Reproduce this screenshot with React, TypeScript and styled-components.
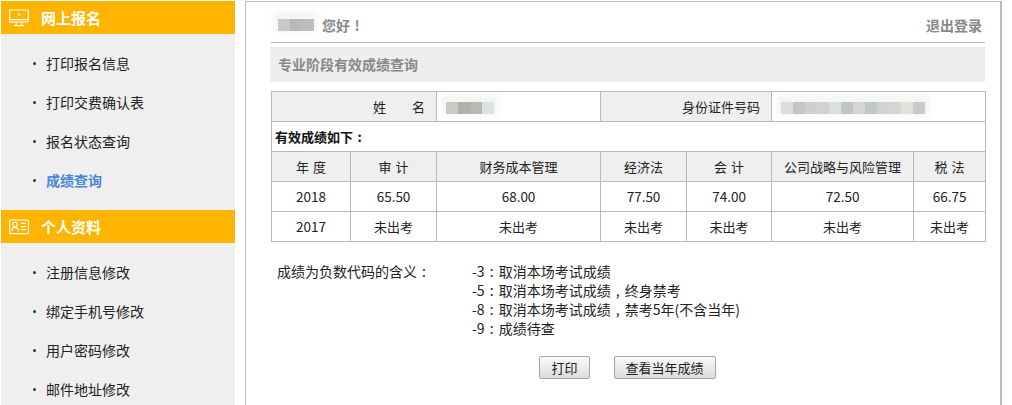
import React from "react";
import styled, { createGlobalStyle } from "styled-components";

const Global = createGlobalStyle`
  html, body { margin: 0; padding: 0; height: 405px; overflow: hidden; background: #fff; }
  body { font-family: "Noto Sans CJK SC", "Noto Sans", sans-serif; font-size: 14px; color: #222; }
`;
const Page = styled.div`display: flex; align-items: flex-start; height: 405px; overflow: hidden; padding: 1px 0 0 1px; box-sizing: border-box;`;
const Sidebar = styled.aside`width: 234px; height: 500px; background: #efefef; flex: none;`;
const SideHead = styled.div`height: 33px; background: #ffb400; color: #fff; font-weight: 700; font-size: 15px; display: flex; align-items: center; padding-left: 8px; gap: 12px;`;
const SideList = styled.ul`list-style: none; margin: 0; padding: 10px 0 10px;`;
const SideItem = styled.li<{ $active?: boolean }>`
  height: 39px; display: flex; align-items: center; padding-left: 32px; gap: 10px; line-height: 39px;
  color: ${(p) => (p.$active ? "#4a86d8" : "#222")}; font-weight: ${(p) => (p.$active ? 700 : 400)};
  &::before { content: ""; width: 3px; height: 3px; border-radius: 50%; background: #333; flex: none; }
`;
const Main = styled.main`width: 757px; height: 500px; margin-left: 10px; border: 2px solid #bcbcbc; border-width: 1px 2px 0 1px; box-sizing: border-box; padding: 0 15px 0 24px; flex: none;`;
const Greeting = styled.div`height: 41px; margin-left: 1px; border-bottom: 1px solid #bbb; display: flex; align-items: center; justify-content: space-between; color: #888; font-weight: 700; padding-top: 5px; box-sizing: border-box; padding-right: 3px;`;
const Hello = styled.span`display: flex; align-items: center;`;
const HelloMosaic = styled.span`display: inline-flex; margin: 0 8px 0 7px;`;
const Title = styled.div`margin-top: 4px; height: 35px; background: #eee; color: #888; font-weight: 700; line-height: 35px; padding-left: 8px;`;
const Mosaic = styled.span`display: inline-flex; height: 12px; flex: none; vertical-align: middle; box-shadow: 0 -3px 5px 4px rgba(235,235,235,.5);`;
const Tile = styled.span<{ $c: string; $w: number }>`width: ${(p) => p.$w}px; background: ${(p) => p.$c};`;
const Punct = styled.span`display: inline-block; width: 1em; text-align: center;`;
const Grid = styled.table`margin: 9px 0 0 1px; width: 714px; border-collapse: collapse; table-layout: fixed; text-align: center; font-size: 13px;`;
const Cell = styled.td<{ $num?: boolean }>`height: 29px; padding: 0; border: 1px solid #b8b8b8; line-height: 29px; color: #222; font-size: ${(p) => (p.$num ? "13.5px" : "13px")};`;
const Head = styled(Cell)`background: #efefef; word-spacing: 1px;`;
const LabelCell = styled(Head)`text-align: right; padding-right: 11px;`;
const ValueCell = styled(Cell)`text-align: left; padding-left: 9px;`;
const Caption = styled(Cell)`text-align: left; padding-left: 3px; font-weight: 700; color: #111;`;
const Notes = styled.div`display: flex; margin: 20px 0 0 7px; line-height: 19px; color: #222;`;
const NoteLabel = styled.div`width: 195px;`;
const Actions = styled.div`display: flex; justify-content: center; gap: 24px; margin-top: 18px;`;
const Btn = styled.button`height: 23px; padding: 0 11px; border: 1px solid #a5a5a5; border-radius: 2px; background: linear-gradient(#fafafa, #dcdcdc); font: inherit; font-size: 13px; line-height: 20px; color: #222;`;

const Monitor = () => (
  <svg width="20" height="18" viewBox="0 0 20 18" fill="none" stroke="#fff" strokeWidth="1.2">
    <rect x="0.6" y="1" width="18.8" height="12" rx="1" />
    <path d="M1 10.6h18M7 13.5v2.4M13 13.5v2.4M5 16.6h10M9.4 4.2l1 2 .8-.3" />
  </svg>
);
const Card = () => (
  <svg width="20" height="16" viewBox="0 0 20 16" fill="none" stroke="#fff" strokeWidth="1.1">
    <rect x="0.6" y="1" width="18.8" height="13.6" rx="1" />
    <circle cx="6" cy="5.6" r="2.3" />
    <path d="M2.4 12.2c.5-2.6 2-3.8 3.6-3.8s3.1 1.2 3.6 3.8M12 4.4h5M12 7.6h5M12 10.8h5" />
  </svg>
);

const nameTiles: [string, number][] = [["#c9c9c9", 12], ["#b9b9bb", 12], ["#bdbcb6", 12]];
const cellTiles: [string, number][] = [["#cbc9c6", 12], ["#b2b0ad", 12], ["#bab8b5", 12], ["#dbe2e4", 12]];
const idTiles: [string, number][] = [["#dcdcd9", 12], ["#c4c5c7", 12], ["#cfcfcf", 12], ["#d0d3d0", 12], ["#dcdfdf", 12], ["#c0c4c5", 12], ["#d5d6d4", 12], ["#c3c6c9", 12], ["#d1d3d2", 12], ["#d4d6d3", 12], ["#e0e0dc", 12], ["#cacace", 12]];

const MosaicBar = ({ tiles }: { tiles: [string, number][] }) => (
  <Mosaic>{tiles.map(([c, w], i) => <Tile key={i} $c={c} $w={w} />)}</Mosaic>
);

const subjects = ["年 度", "审 计", "财务成本管理", "经济法", "会 计", "公司战略与风险管理", "税 法"];
const rows = [
  ["2018", "65.50", "68.00", "77.50", "74.00", "72.50", "66.75"],
  ["2017", "未出考", "未出考", "未出考", "未出考", "未出考", "未出考"],
];
const widths = [79, 86, 164, 86, 85, 142, 72];
const Colon = () => <Punct>:</Punct>;
const Comma = () => <Punct>,</Punct>;

export default function App() {
  return (
    <Page>
      <Global />
      <Sidebar>
        <SideHead><Monitor />网上报名</SideHead>
        <SideList>
          <SideItem>打印报名信息</SideItem>
          <SideItem>打印交费确认表</SideItem>
          <SideItem>报名状态查询</SideItem>
          <SideItem $active>成绩查询</SideItem>
        </SideList>
        <SideHead><Card />个人资料</SideHead>
        <SideList>
          <SideItem>注册信息修改</SideItem>
          <SideItem>绑定手机号修改</SideItem>
          <SideItem>用户密码修改</SideItem>
          <SideItem>邮件地址修改</SideItem>
        </SideList>
      </Sidebar>
      <Main>
        <Greeting>
          <Hello><HelloMosaic><MosaicBar tiles={nameTiles} /></HelloMosaic>您好<Punct>!</Punct></Hello>
          <span>退出登录</span>
        </Greeting>
        <Title>专业阶段有效成绩查询</Title>
        <Grid>
          <colgroup>{widths.map((w, i) => <col key={i} width={w} />)}</colgroup>
          <tbody>
            <tr>
              <LabelCell colSpan={2}>姓&emsp;&emsp;名</LabelCell>
              <ValueCell><MosaicBar tiles={cellTiles} /></ValueCell>
              <LabelCell colSpan={2}>身份证件号码</LabelCell>
              <ValueCell colSpan={2}><MosaicBar tiles={idTiles} /></ValueCell>
            </tr>
            <tr><Caption colSpan={7}>有效成绩如下<Colon /></Caption></tr>
            <tr>{subjects.map((s) => <Head key={s}>{s}</Head>)}</tr>
            {rows.map((r) => (
              <tr key={r[0]}>{r.map((v, i) => <Cell key={i} $num={/\d/.test(v)}>{v}</Cell>)}</tr>
            ))}
          </tbody>
        </Grid>
        <Notes>
          <NoteLabel>成绩为负数代码的含义<Colon /></NoteLabel>
          <div>
            <div>-3<Colon />取消本场考试成绩</div>
            <div>-5<Colon />取消本场考试成绩<Comma />终身禁考</div>
            <div>-8<Colon />取消本场考试成绩<Comma />禁考5年(不含当年)</div>
            <div>-9<Colon />成绩待查</div>
          </div>
        </Notes>
        <Actions>
          <Btn>打印</Btn>
          <Btn>查看当年成绩</Btn>
        </Actions>
      </Main>
    </Page>
  );
}
